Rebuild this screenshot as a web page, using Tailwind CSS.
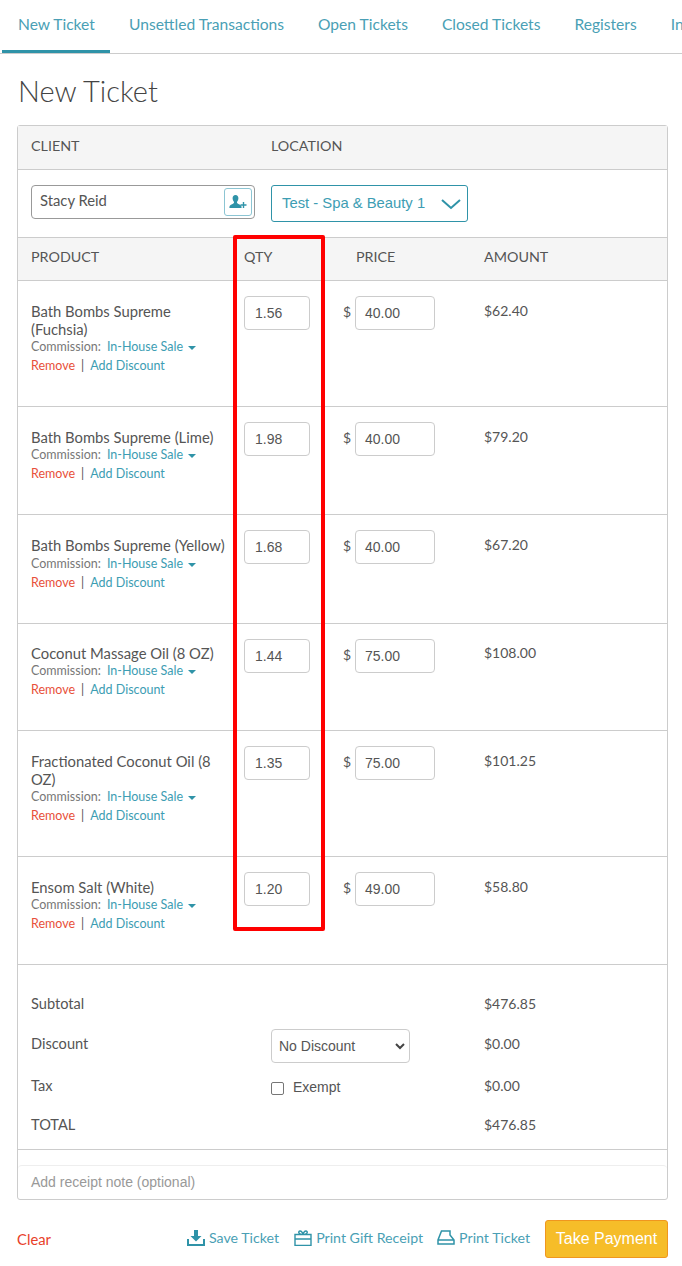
<!DOCTYPE html>
<html lang="en">
<head>
  <meta charset="UTF-8">
  <title>New Ticket</title>
  <script src="https://cdn.jsdelivr.net/npm/@tailwindcss/browser@4"></script>
</head>
<body class="bg-white font-['Lato',sans-serif] text-[#555] relative h-[1266px] overflow-hidden">

  <!-- tabs -->
  <nav class="h-[54px] border-b border-[#ccc] flex pl-[2px] text-[15.6px] text-[#4a9fb5] whitespace-nowrap overflow-hidden">
    <a class="shrink-0 h-[53px] w-[108px] pl-[16px] pt-[13px] border-b-[3px] border-[#2f93a8]">New Ticket</a>
    <a class="shrink-0 ml-[19px] pt-[13px]">Unsettled Transactions</a>
    <a class="shrink-0 ml-[34px] pt-[13px]">Open Tickets</a>
    <a class="shrink-0 ml-[34px] pt-[13px]">Closed Tickets</a>
    <a class="shrink-0 ml-[34px] pt-[13px]">Registers</a>
    <a class="shrink-0 ml-[34px] pt-[13px]">Inventory</a>
  </nav>

  <h1 class="ml-[18px] mt-[19px] h-[52px] text-[29px] leading-[36px] font-light text-[#444]">New Ticket</h1>

  <div class="ml-[17px] w-[651px] h-[1075px] border border-[#ccc] rounded-[3px]">
    <div class="h-[44px] bg-[#f5f5f5] border-b border-[#ccc] flex items-center pl-[13px] pb-[4px] text-[14.3px]">
      <div class="w-[240px]">CLIENT</div>
      <div>LOCATION</div>
    </div>
    <div class="h-[68px] border-b border-[#ccc] flex pl-[13px] pt-[15px]">
      <div class="w-[224px] h-[34px] border border-[#999] rounded-[4px] flex items-center justify-between pl-[8px] pr-[2px] text-[14.8px]">
        <span class="-mt-[3px]">Stacy Reid</span>
        <span class="w-[28px] h-[28px] border border-[#8cc5d3] rounded-[3px] flex items-center justify-center">
          <svg width="18" height="14" viewBox="0 0 18 14" fill="#2f93a8"><path d="M6.5 0C4.6 0 3.6 1.400 3.600 3.200 3.600 4.800 4.300 6 5 6.800 5.200 7.800 4.800 8.400 3.600 9 2 9.700 .8 10.300 .5 11.500L.4 13H12.600L12.500 11.500C12.200 10.300 11 9.700 9.400 9 8.200 8.400 7.800 7.800 8 6.800 8.700 6 9.400 4.800 9.400 3.200 9.400 1.400 8.400 0 6.500 0Z"/><path d="M13.800 7H15.200V9.300H17.500V10.700H15.200V13H13.800V10.700H11.500V9.300H13.800Z"/></svg>
        </span>
      </div>
      <div class="ml-[16px] w-[197px] h-[37px] border border-[#2f93a8] rounded-[3px] flex items-center justify-between pl-[10px] pr-[6px] font-['Liberation_Sans',sans-serif] text-[14.8px] text-[#3d9db3]">
        <span>Test - Spa &amp; Beauty 1</span>
        <svg width="20" height="12" viewBox="0 0 20 12" fill="none" stroke="#2f93a8" stroke-width="2"><path d="M1 2l9 8 9-8"/></svg>
      </div>
    </div>

    <div class="h-[43px] bg-[#f5f5f5] border-b border-[#ccc] grid grid-cols-[213px_112px_128px_1fr] items-center pl-[13px] pb-[4px] text-[14.3px]">
      <div>PRODUCT</div><div>QTY</div><div>PRICE</div><div>AMOUNT</div>
    </div>

    <!-- product rows -->
    <div class="h-[126px] border-b border-[#ccc] grid grid-cols-[213px_99px_141px_1fr] pl-[13px] pt-[15px]">
      <div class="text-[14.8px] leading-[18px] pt-[6px] pr-[14px]">
        <div>Bath Bombs Supreme (Fuchsia)</div>
        <div class="text-[12.5px] leading-[18px] text-[#777] flex items-center">Commission:<span class="ml-[6px] text-[#3d9db3]">In-House Sale</span><span class="ml-[5px] mt-[2px] border-x-[4px] border-x-transparent border-t-[4px] border-t-[#2f93a8]"></span></div>
        <div class="text-[12.5px] leading-[18px] mt-[1px]"><span class="text-[#e8503a]">Remove</span><span class="mx-[6px] text-[#555]">|</span><span class="text-[#3d9db3]">Add Discount</span></div>
      </div>
      <div><div class="w-[66px] h-[34px] border border-[#ccc] rounded-[4px] pl-[10px] leading-[32px] font-['Liberation_Sans',sans-serif] text-[14px]">1.56</div></div>
      <div class="flex"><span class="w-[12px] leading-[32px] text-[14px]">$</span><div class="w-[80px] h-[34px] border border-[#ccc] rounded-[4px] pl-[9px] leading-[32px] font-['Liberation_Sans',sans-serif] text-[14px]">40.00</div></div>
      <div class="text-[14px] leading-[18px] pt-[6px]">$62.40</div>
    </div>

    <div class="h-[108px] border-b border-[#ccc] grid grid-cols-[213px_99px_141px_1fr] pl-[13px] pt-[15px]">
      <div class="text-[14.8px] leading-[18px] pt-[6px] pr-[14px]">
        <div>Bath Bombs Supreme (Lime)</div>
        <div class="text-[12.5px] leading-[18px] text-[#777] flex items-center">Commission:<span class="ml-[6px] text-[#3d9db3]">In-House Sale</span><span class="ml-[5px] mt-[2px] border-x-[4px] border-x-transparent border-t-[4px] border-t-[#2f93a8]"></span></div>
        <div class="text-[12.5px] leading-[18px] mt-[1px]"><span class="text-[#e8503a]">Remove</span><span class="mx-[6px] text-[#555]">|</span><span class="text-[#3d9db3]">Add Discount</span></div>
      </div>
      <div><div class="w-[66px] h-[34px] border border-[#ccc] rounded-[4px] pl-[10px] leading-[32px] font-['Liberation_Sans',sans-serif] text-[14px]">1.98</div></div>
      <div class="flex"><span class="w-[12px] leading-[32px] text-[14px]">$</span><div class="w-[80px] h-[34px] border border-[#ccc] rounded-[4px] pl-[9px] leading-[32px] font-['Liberation_Sans',sans-serif] text-[14px]">40.00</div></div>
      <div class="text-[14px] leading-[18px] pt-[6px]">$79.20</div>
    </div>

    <div class="h-[109px] border-b border-[#ccc] grid grid-cols-[213px_99px_141px_1fr] pl-[13px] pt-[15px]">
      <div class="text-[14.8px] leading-[18px] pt-[6px] pr-[14px]">
        <div>Bath Bombs Supreme (Yellow)</div>
        <div class="text-[12.5px] leading-[18px] mt-[1px] text-[#777] flex items-center">Commission:<span class="ml-[6px] text-[#3d9db3]">In-House Sale</span><span class="ml-[5px] mt-[2px] border-x-[4px] border-x-transparent border-t-[4px] border-t-[#2f93a8]"></span></div>
        <div class="text-[12.5px] leading-[18px] mt-[1px]"><span class="text-[#e8503a]">Remove</span><span class="mx-[6px] text-[#555]">|</span><span class="text-[#3d9db3]">Add Discount</span></div>
      </div>
      <div><div class="w-[66px] h-[34px] border border-[#ccc] rounded-[4px] pl-[10px] leading-[32px] font-['Liberation_Sans',sans-serif] text-[14px]">1.68</div></div>
      <div class="flex"><span class="w-[12px] leading-[32px] text-[14px]">$</span><div class="w-[80px] h-[34px] border border-[#ccc] rounded-[4px] pl-[9px] leading-[32px] font-['Liberation_Sans',sans-serif] text-[14px]">40.00</div></div>
      <div class="text-[14px] leading-[18px] pt-[6px]">$67.20</div>
    </div>

    <div class="h-[107px] border-b border-[#ccc] grid grid-cols-[213px_99px_141px_1fr] pl-[13px] pt-[15px]">
      <div class="text-[14.8px] leading-[18px] pt-[5px] pr-[14px]">
        <div>Coconut Massage Oil (8 OZ)</div>
        <div class="text-[12.5px] leading-[18px] text-[#777] flex items-center">Commission:<span class="ml-[6px] text-[#3d9db3]">In-House Sale</span><span class="ml-[5px] mt-[2px] border-x-[4px] border-x-transparent border-t-[4px] border-t-[#2f93a8]"></span></div>
        <div class="text-[12.5px] leading-[18px] mt-[1px]"><span class="text-[#e8503a]">Remove</span><span class="mx-[6px] text-[#555]">|</span><span class="text-[#3d9db3]">Add Discount</span></div>
      </div>
      <div><div class="w-[66px] h-[34px] border border-[#ccc] rounded-[4px] pl-[10px] leading-[32px] font-['Liberation_Sans',sans-serif] text-[14px]">1.44</div></div>
      <div class="flex"><span class="w-[12px] leading-[32px] text-[14px]">$</span><div class="w-[80px] h-[34px] border border-[#ccc] rounded-[4px] pl-[9px] leading-[32px] font-['Liberation_Sans',sans-serif] text-[14px]">75.00</div></div>
      <div class="text-[14px] leading-[18px] pt-[5px]">$108.00</div>
    </div>

    <div class="h-[126px] border-b border-[#ccc] grid grid-cols-[213px_99px_141px_1fr] pl-[13px] pt-[15px]">
      <div class="text-[14.8px] leading-[18px] pt-[6px] pr-[14px]">
        <div>Fractionated Coconut Oil (8 OZ)</div>
        <div class="text-[12.5px] leading-[18px] text-[#777] flex items-center">Commission:<span class="ml-[6px] text-[#3d9db3]">In-House Sale</span><span class="ml-[5px] mt-[2px] border-x-[4px] border-x-transparent border-t-[4px] border-t-[#2f93a8]"></span></div>
        <div class="text-[12.5px] leading-[18px] mt-[1px]"><span class="text-[#e8503a]">Remove</span><span class="mx-[6px] text-[#555]">|</span><span class="text-[#3d9db3]">Add Discount</span></div>
      </div>
      <div><div class="w-[66px] h-[34px] border border-[#ccc] rounded-[4px] pl-[10px] leading-[32px] font-['Liberation_Sans',sans-serif] text-[14px]">1.35</div></div>
      <div class="flex"><span class="w-[12px] leading-[32px] text-[14px]">$</span><div class="w-[80px] h-[34px] border border-[#ccc] rounded-[4px] pl-[9px] leading-[32px] font-['Liberation_Sans',sans-serif] text-[14px]">75.00</div></div>
      <div class="text-[14px] leading-[18px] pt-[6px]">$101.25</div>
    </div>

    <div class="h-[108px] border-b border-[#ccc] grid grid-cols-[213px_99px_141px_1fr] pl-[13px] pt-[15px]">
      <div class="text-[14.8px] leading-[18px] pt-[6px] pr-[14px]">
        <div>Ensom Salt (White)</div>
        <div class="text-[12.5px] leading-[18px] text-[#777] flex items-center">Commission:<span class="ml-[6px] text-[#3d9db3]">In-House Sale</span><span class="ml-[5px] mt-[2px] border-x-[4px] border-x-transparent border-t-[4px] border-t-[#2f93a8]"></span></div>
        <div class="text-[12.5px] leading-[18px] mt-[1px]"><span class="text-[#e8503a]">Remove</span><span class="mx-[6px] text-[#555]">|</span><span class="text-[#3d9db3]">Add Discount</span></div>
      </div>
      <div><div class="w-[66px] h-[34px] border border-[#ccc] rounded-[4px] pl-[10px] leading-[32px] font-['Liberation_Sans',sans-serif] text-[14px]">1.20</div></div>
      <div class="flex"><span class="w-[12px] leading-[32px] text-[14px]">$</span><div class="w-[80px] h-[34px] border border-[#ccc] rounded-[4px] pl-[9px] leading-[32px] font-['Liberation_Sans',sans-serif] text-[14px]">49.00</div></div>
      <div class="text-[14px] leading-[18px] pt-[6px]">$58.80</div>
    </div>

    <!-- totals -->
    <div class="h-[185px] border-b border-[#ccc] pl-[13px] text-[14.6px] grid grid-cols-[240px_213px_1fr] grid-rows-[65px_42px_39px_39px] leading-[18px]">
      <div class="pt-[30px]">Subtotal</div><div></div><div class="pt-[30px] text-[14px]">$476.85</div>
      <div class="pt-[5px]">Discount</div>
      <div class="-mt-[1px]"><div class="w-[139px] h-[34px] border border-[#ccc] rounded-[4px] flex items-center justify-between pl-[7px] pr-[4px] font-['Liberation_Sans',sans-serif] text-[14px]">No Discount<svg width="10" height="7" viewBox="0 0 10 7" fill="none" stroke="#444" stroke-width="2"><path d="M1 1l4 4 4-4"/></svg></div></div>
      <div class="pt-[5px] text-[14px]">$0.00</div>
      <div class="pt-[5px]">Tax</div>
      <div class="pt-[5px] flex items-center h-[25px] font-['Liberation_Sans',sans-serif] text-[14px]"><span class="w-[13px] h-[13px] border border-[#767676] rounded-[2px] mt-[3px]"></span><span class="ml-[9px]">Exempt</span></div>
      <div class="pt-[5px] text-[14px]">$0.00</div>
      <div class="pt-[5px]">TOTAL</div><div></div><div class="pt-[5px] text-[14px]">$476.85</div>
    </div>
    <div class="pt-[15px]">
      <div class="h-[35px] border-t border-[#eee] rounded-t-[4px] pl-[13px] pt-[7px] leading-[18px] text-[14px] font-['Liberation_Sans',sans-serif] text-[#999]">Add receipt note (optional)</div>
    </div>
  </div>

  <!-- footer actions -->
  <div class="ml-[17px] w-[651px] mt-[20px] flex items-center text-[14.2px] text-[#4a9fb5]">
    <span class="text-[#e8402a] mt-[1px] text-[14.8px]">Clear</span>
    <span class="ml-auto flex items-center -mt-[2px]">
      <svg class="mr-[4px]" width="18" height="16" viewBox="0 0 18 16" fill="#2f93a8"><path d="M7 0h4v6h3.500L9 11.500 3.500 6H7Z"/><path d="M0 9h2v5h14V9h2v7H0Z"/></svg>
      Save Ticket
    </span>
    <span class="ml-[15px] flex items-center -mt-[2px]">
      <svg class="mr-[4px]" width="18" height="16" viewBox="0 0 18 16" fill="none" stroke="#2f93a8" stroke-width="1.400"><path d="M1 4.500h16v11H1ZM1 9h16M6 1c-2 0-2 3.500 3 3.500C14 4.500 14 1 12 1 10.500 1 9 3 9 4.500 9 3 7.500 1 6 1Z"/></svg>
      Print Gift Receipt
    </span>
    <span class="ml-[14px] flex items-center -mt-[2px]">
      <svg class="mr-[4px]" width="18" height="15" viewBox="0 0 18 15" fill="none" stroke="#2f93a8" stroke-width="1.500"><path d="M1 14V10L4.500 1H13V5L17 10V14ZM1 10H17"/></svg>
      Print Ticket
    </span>
    <span class="ml-[15px] w-[123px] h-[38px] bg-[#f6bd29] border border-[#f0961e] rounded-[3px] flex items-center justify-center font-['Liberation_Sans',sans-serif] text-[16px] text-white">Take Payment</span>
  </div>

  <!-- red highlight box drawn over the QTY column -->
  <div class="absolute left-[233px] top-[235px] w-[92px] h-[696px] border-[4px] border-[#ff0000] rounded-[2px]"></div>
</body>
</html>
